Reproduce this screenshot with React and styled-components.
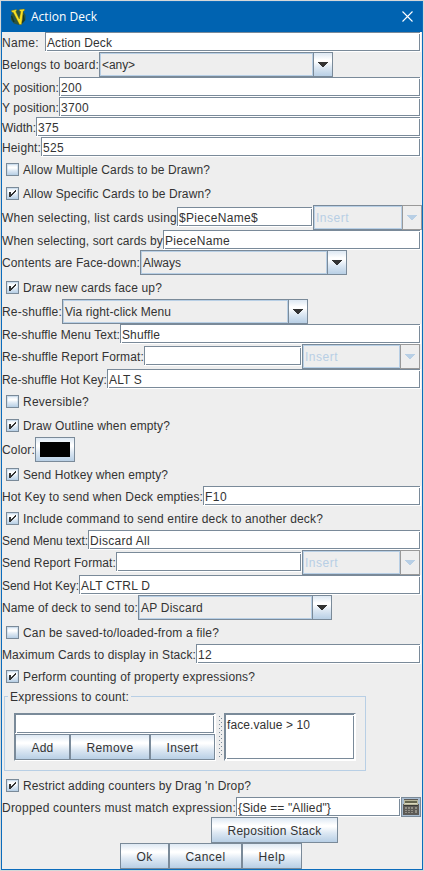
import React, { useLayoutEffect, useRef, useState } from "react";
import styled, { createGlobalStyle, css } from "styled-components";

const LINE = "#7a8a99";
const SOFT = "#b8cfe5";
const PANEL = "#eeeeee";
const ocean = css`
  background: linear-gradient(#dde8f3 0%, #ffffff 30%, #ffffff 36%, #dde8f3 62%, #b8cfe5 100%);
`;

const GlobalStyle = createGlobalStyle`
  * { box-sizing: border-box; }
  body { margin: 0; background: #d5d8d8; overflow: hidden; }
`;

const Frame = styled.div`
  width: 424px;
  height: 871px;
  padding: 1px;
`;
const Dialog = styled.main`
  width: 422px;
  height: 869px;
  border: 1px solid #0c6cbc;
  background: ${PANEL};
  color: #333333;
  font: 12px "Liberation Sans", Arial, sans-serif;
`;
const TitleBar = styled.header`
  height: 30px;
  display: flex;
  align-items: center;
  background: #0063b1;
  color: #ffffff;
  padding: 0 9px 0 8px;
  font: 12px/28px "Open Sans", "Noto Sans", sans-serif;
  svg { flex: none; display: block; }
`;
const Caption = styled.h1`
  flex: 1;
  margin: 0 0 1px 5px;
  font: inherit;
`;
const CloseIcon = styled.svg`
  margin-bottom: 1px;
`;
const Row = styled.div`
  display: flex;
  height: ${(p) => p.$h || 20}px;
  line-height: ${(p) => (p.$h ? p.$h + 1 : 22)}px;
`;
const LabelCell = styled.div`
  flex: none;
  width: ${(p) => p.$w}px;
`;
const FittedText = styled.span`
  display: block;
  flex: none;
  white-space: pre;
  width: ${(p) => p.$w}px;
`;
const lowered = css`
  background:
    linear-gradient(${LINE}, ${LINE}) 0 0 / calc(100% - 1px) 1px no-repeat,
    linear-gradient(${LINE}, ${LINE}) 0 0 / 1px calc(100% - 1px) no-repeat,
    linear-gradient(${LINE}, ${LINE}) right 1px top 2px / 1px calc(100% - 3px) no-repeat,
    linear-gradient(${LINE}, ${LINE}) right 1px bottom 1px / calc(100% - 3px) 1px no-repeat,
    #ffffff;
`;
const FieldBox = styled.div`
  ${lowered}
  flex: none;
  width: ${(p) => p.$w}px;
  height: 20px;
  line-height: 22px;
  padding-left: 2px;
  margin-top: ${(p) => (p.$drop ? 2 : 0)}px;
`;
const ComboBox = styled.div`
  display: flex;
  flex: none;
  width: ${(p) => p.$w}px;
  height: 25px;
  line-height: 24px;
  color: ${(p) => (p.$disabled ? SOFT : "#333333")};
`;
const ComboValue = styled.div`
  flex: 1;
  border: 1px solid ${LINE};
  border-right: 0;
  box-shadow: inset 0 0 0 1px ${SOFT};
  padding-left: 2px;
`;
const ComboArrow = styled.div`
  ${(p) => (p.$disabled ? css`background: ${PANEL};` : ocean)}
  width: 20px;
  border: 1px solid ${(p) => (p.$disabled ? "#999999" : LINE)};
  display: flex;
  align-items: center;
  justify-content: center;
`;
const CheckRow = styled.label`
  display: flex;
  height: 24px;
  line-height: 26px;
  padding-left: 4px;
`;
const CheckBox = styled.span`
  ${ocean}
  flex: none;
  width: 13px;
  height: 13px;
  margin: 6px 4px 0 0;
  border: 1px solid ${LINE};
  box-shadow: inset 0 0 0 1px rgba(184, 207, 229, 0.5);
  svg { display: block; }
`;
const Button = styled.button`
  ${ocean}
  flex: none;
  width: ${(p) => p.$w}px;
  height: 26px;
  padding: 0;
  border: 1px solid ${LINE};
  border-radius: 0;
  color: #333333;
  font: inherit;
  line-height: 26px;
  display: flex;
  justify-content: center;
  align-items: flex-start;
`;
const ColorButton = styled(Button)`
  height: 25px;
  align-items: center;
`;
const Swatch = styled.span`
  width: 30px;
  height: 15px;
  margin-bottom: 1px;
  background: #000000;
`;
const Group = styled.fieldset`
  height: 83px;
  width: 362px;
  margin: 0 0 2px 2px;
  padding: 8px 0 0 9px;
  border: 1px solid ${SOFT};
  min-width: 0;
`;
const Legend = styled.legend`
  height: 17px;
  line-height: 18px;
  padding: 0 2px;
  margin-left: -6px;
`;
const Split = styled.div`
  display: flex;
  width: 342px;
  height: 48px;
`;
const SplitSide = styled.div`
  width: ${(p) => p.$w}px;
  border: 1px solid #ffffff;
  border-top-color: ${LINE};
  border-left-color: ${LINE};
`;
const Divider = styled.div`
  width: 8px;
  padding: 3px 1px 2px 3px;
`;
const List = styled.div`
  ${lowered}
  height: 46px;
  padding: 1px 0 0 2px;
  line-height: 21px;
`;
const ToolButton = styled.button`
  width: 20px;
  height: 20px;
  padding: 1px;
  border: 1px solid ${LINE};
  background: #a9bdd1;
  svg { display: block; }
`;
const Buttons = styled.div`
  display: flex;
  padding-left: ${(p) => p.$indent}px;
`;

/* Spreads the glyphs of a string over a whole-pixel advance width. */
function Text({ w, children }) {
  const ref = useRef(null);
  const [spacing, setSpacing] = useState(0);
  useLayoutEffect(() => {
    const range = document.createRange();
    range.selectNodeContents(ref.current);
    setSpacing((w - range.getBoundingClientRect().width) / children.length);
  }, [w, children]);
  return (
    <FittedText ref={ref} $w={w} style={{ letterSpacing: spacing }}>
      {children}
    </FittedText>
  );
}

function Field({ w, text, tw, drop }) {
  return (
    <FieldBox $w={w} $drop={drop}>
      {text ? <Text w={tw}>{text}</Text> : null}
    </FieldBox>
  );
}

/* x is the label's advance width; the field takes the rest of the line. */
function FieldRow({ label, x, lw = x, text, tw }) {
  return (
    <Row>
      <LabelCell $w={x}><Text w={lw}>{label}</Text></LabelCell>
      <Field w={419 - x} text={text} tw={tw} />
    </Row>
  );
}

function Combo({ w, text, tw, disabled }) {
  return (
    <ComboBox $w={w} $disabled={disabled}>
      <ComboValue><Text w={tw}>{text}</Text></ComboValue>
      <ComboArrow $disabled={disabled}>
        <svg width="10" height="5" viewBox="0 0 10 5" shapeRendering="crispEdges">
          <path d="M0 0h10v1H0zM1 1h8v1H1zM2 2h6v1H2zM3 3h4v1H3zM4 4h2v1H4z" fill={disabled ? SOFT : "#333333"} />
        </svg>
      </ComboArrow>
    </ComboBox>
  );
}

function ComboRow({ label, x, w, text, tw }) {
  return (
    <Row $h={25}>
      <Text w={x}>{label}</Text>
      <Combo w={w} text={text} tw={tw} />
    </Row>
  );
}

function FormatRow({ label, x, fw, cw, text, tw }) {
  return (
    <Row $h={25}>
      <Text w={x}>{label}</Text>
      <Field w={fw} text={text} tw={tw} drop />
      <Combo w={cw} text="Insert" tw={33} disabled />
    </Row>
  );
}

function Check({ label, w, on }) {
  return (
    <CheckRow>
      <CheckBox>
        {on && (
          <svg width="11" height="11" viewBox="0 0 11 11" shapeRendering="crispEdges">
            <path d="M2 4h2v5H2zM4 6h1v2H4zM5 5h1v2H5zM6 4h1v2H6zM7 3h1v2H7zM8 2h1v2H8z" fill="#333333" />
          </svg>
        )}
      </CheckBox>
      <Text w={w}>{label}</Text>
    </CheckRow>
  );
}

function Logo() {
  return (
    <svg width="16" height="18" viewBox="0 0 16 18">
      <path d="M4 3l4-1 5 1 2.500 4v5L13 15l-4 2-5-1.500L1 12V7z" fill="#2b5540" />
      <path d="M1.500 8l2.500 6M13 7l1 5-2.500 3" stroke="#15382b" strokeWidth="1.500" fill="none" />
      <path d="M1.500 2.500L6.500 1.500v1.500l-.8.600L9.300 11l1.500-7.500-1.300-.5V1.500L14.500 1v1.500l-1.300.8L11.500 16.500H9.500L3.300 4.500 1.500 4z" fill="#f7e225" stroke="#6b6212" strokeWidth=".4" />
    </svg>
  );
}

function Calculator() {
  return (
    <svg width="16" height="16" viewBox="0 0 16 16" shapeRendering="crispEdges">
      <path d="M1 0h14v5h1v11H0V5h1z" fill="#5c5a56" />
      <path d="M1 1h14v5H1z" fill="#b8b69b" />
      <path d="M2 2h12v2H2z" fill="#64654f" />
      <path d="M2 4h12v1H2z" fill="#d9d7bd" />
      <path d="M1 6h14v1H1z" fill="#393937" />
      <path d="M2 8h2v2H2zM5 8h2v2H5zM8 8h2v2H8zM12 8h2v2h-2zM2 11h2v1H2zM5 11h2v1H5zM8 11h2v1H8zM12 11h2v3h-2zM2 13h2v1H2zM5 13h2v1H5zM8 13h2v1H8z" fill="#929087" />
    </svg>
  );
}

function Dots() {
  const dots = [];
  for (let y = 0; y < 42; y += 2) {
    dots.push(<rect key={y} x={y % 4 ? 2 : 0} y={y} width="1" height="1" />);
  }
  return <svg width="4" height="42" fill={LINE} shapeRendering="crispEdges">{dots}</svg>;
}

export default function App() {
  return (
    <Frame>
      <GlobalStyle />
      <Dialog>
        <TitleBar>
          <Logo />
          <Caption><Text w={66}>Action Deck</Text></Caption>
          <CloseIcon width="11" height="11" viewBox="0 0 11 11">
            <path d="M.5.5l10 10M10.500.5l-10 10" stroke="#ffffff" strokeWidth="1.100" />
          </CloseIcon>
        </TitleBar>
        <FieldRow label="Name:" x={43} lw={37} text="Action Deck" tw={65} />
        <ComboRow label="Belongs to board:" x={97} w={234} text="<any>" tw={33} />
        <FieldRow label="X position:" x={57} text="200" tw={21} />
        <FieldRow label="Y position:" x={57} text="3700" tw={28} />
        <FieldRow label="Width:" x={34} text="375" tw={21} />
        <FieldRow label="Height:" x={39} text="525" tw={21} />
        <Check label="Allow Multiple Cards to be Drawn?" w={187} />
        <Check label="Allow Specific Cards to be Drawn?" w={188} on />
        <FormatRow label="When selecting, list cards using" x={175} fw={136} cw={109} text="$PieceName$" tw={79} />
        <FieldRow label="When selecting, sort cards by" x={161} text="PieceName" tw={65} />
        <ComboRow label="Contents are Face-down:" x={138} w={207} text="Always" tw={38} />
        <Check label="Draw new cards face up?" w={139} on />
        <ComboRow label="Re-shuffle:" x={60} w={246} text="Via right-click Menu" tw={106} />
        <FieldRow label="Re-shuffle Menu Text:" x={118} text="Shuffle" tw={38} />
        <FormatRow label="Re-shuffle Report Format:" x={142} fw={158} cw={118} />
        <FieldRow label="Re-shuffle Hot Key:" x={105} text="ALT S" tw={33} />
        <Check label="Reversible?" w={66} />
        <Check label="Draw Outline when empty?" w={147} on />
        <Row $h={25}>
          <Text w={33}>Color:</Text>
          <ColorButton $w={40} aria-label="Outline color"><Swatch /></ColorButton>
        </Row>
        <Check label="Send Hotkey when empty?" w={145} on />
        <FieldRow label="Hot Key to send when Deck empties:" x={201} text="F10" tw={22} />
        <Check label="Include command to send entire deck to another deck?" w={300} on />
        <FieldRow label="Send Menu text:" x={86} text="Discard All" tw={60} />
        <FormatRow label="Send Report Format:" x={114} fw={186} cw={118} />
        <FieldRow label="Send Hot Key:" x={77} text="ALT CTRL D" tw={69} />
        <ComboRow label="Name of deck to send to:" x={136} w={194} text="AP Discard" tw={62} />
        <Check label="Can be saved-to/loaded-from a file?" w={196} />
        <FieldRow label="Maximum Cards to display in Stack:" x={194} text="12" tw={14} />
        <Check label="Perform counting of property expressions?" w={232} on />
        <Group>
          <Legend><Text w={119}>Expressions to count:</Text></Legend>
          <Split>
            <SplitSide $w={202}>
              <Field w={200} />
              <Buttons $indent={0}>
                <Button $w={55}><Text w={22}>Add</Text></Button>
                <Button $w={80}><Text w={47}>Remove</Text></Button>
                <Button $w={65}><Text w={32}>Insert</Text></Button>
              </Buttons>
            </SplitSide>
            <Divider><Dots /></Divider>
            <SplitSide $w={132}>
              <List><Text w={83}>{"face.value > 10"}</Text></List>
            </SplitSide>
          </Split>
        </Group>
        <Check label="Restrict adding counters by Drag 'n Drop?" w={228} on />
        <Row>
          <Text w={234}>Dropped counters must match expression:</Text>
          <Field w={165} text={'{Side == "Allied"}'} tw={93} />
          <ToolButton aria-label="Expression builder"><Calculator /></ToolButton>
        </Row>
        <Buttons $indent={209}>
          <Button $w={127}><Text w={94}>Reposition Stack</Text></Button>
        </Buttons>
        <Buttons $indent={118}>
          <Button $w={49}><Text w={16}>Ok</Text></Button>
          <Button $w={73}><Text w={40}>Cancel</Text></Button>
          <Button $w={60}><Text w={27}>Help</Text></Button>
        </Buttons>
      </Dialog>
    </Frame>
  );
}
